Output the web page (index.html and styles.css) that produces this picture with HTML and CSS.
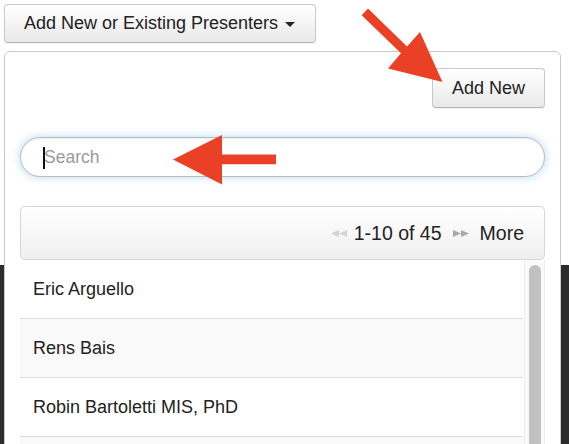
FILE: index.html
```html
<!DOCTYPE html>
<html>
<head>
<meta charset="utf-8">
<link rel="stylesheet" href="styles.css">
</head>
<body>
<div class="page">
  <button class="btn btn-toggle">Add New or Existing Presenters<span class="caret"></span></button>
  <div class="panel">
    <div class="panel-head">
      <button class="btn btn-add">Add New</button>
    </div>
    <div class="search-wrap">
      <input class="search" type="text" placeholder="Search">
      <span class="cursor"></span>
    </div>
    <div class="pager">
      <svg class="pg-arrow prev" width="16" height="7" viewBox="0 0 16 7"><polygon points="0,3.5 8,0 8,7"/><polygon points="8,3.5 16,0 16,7"/></svg>
      <span class="pg-count">1-10 of 45</span>
      <svg class="pg-arrow next" width="16" height="7" viewBox="0 0 16 7"><polygon points="0,0 8,3.5 0,7"/><polygon points="8,0 16,3.5 8,7"/></svg>
      <span class="pg-more">More</span>
    </div>
    <div class="list">
      <ul class="rows">
        <li class="row">Eric Arguello</li>
        <li class="row alt">Rens Bais</li>
        <li class="row">Robin Bartoletti MIS, PhD</li>
        <li class="row alt"></li>
      </ul>
      <div class="scroll"><div class="thumb"></div></div>
    </div>
  </div>
  <svg class="annot" width="569" height="444" viewBox="0 0 569 444">
    <polygon points="368,8.5 407,46.5 420,32 442.5,82 388,68.5 401,53.3 361.7,15.2"/>
    <polygon points="173,159.5 222,135 222,154.5 276,154.5 276,164.3 222,164.3 222,184.5"/>
  </svg>
</div>
</body>
</html>
```

FILE: styles.css
```css
html, body {
  margin: 0;
  padding: 0;
  overflow: hidden;
}
body {
  width: 569px;
  height: 444px;
  background: linear-gradient(#ffffff 0, #ffffff 265px, #2c2c2c 265px, #2c2c2c 100%);
  font-family: "Liberation Sans", Arial, Helvetica, sans-serif;
  color: #222;
}
.page {
  position: relative;
  padding: 4px 0 0 4px;
  height: 444px;
  box-sizing: border-box;
  overflow: hidden;
}
.btn {
  display: flex;
  align-items: center;
  box-sizing: border-box;
  font-family: inherit;
  font-size: 18px;
  color: #222;
  background: linear-gradient(#ffffff, #e9e9e9);
  border: 1px solid #c8c8c8;
  border-bottom-color: #b5b5b5;
  border-radius: 4px;
  box-shadow: inset 0 1px 0 rgba(255,255,255,0.6), 0 1px 1px rgba(0,0,0,0.05);
  margin: 0;
}
.btn-toggle {
  height: 39px;
  padding: 0 20px 0 19px;
}
.caret {
  display: inline-block;
  width: 0;
  height: 0;
  margin-left: 7px;
  margin-top: 2px;
  border-top: 5px solid #222;
  border-left: 5px solid transparent;
  border-right: 5px solid transparent;
}
.panel {
  margin-top: 8px;
  width: 557px;
  height: 440px;
  box-sizing: border-box;
  border: 1px solid #c9c9c9;
  border-radius: 6px;
  background: #fff;
  padding: 16px 15px 0 15px;
  overflow: hidden;
}
.panel-head {
  display: flex;
  justify-content: flex-end;
}
.btn-add {
  height: 40px;
  padding: 0 19px;
}
.search-wrap {
  position: relative;
  margin-top: 29px;
}
.search {
  display: block;
  width: 100%;
  height: 40px;
  box-sizing: border-box;
  border: 1px solid #bdbdbd;
  border-radius: 20px;
  padding: 0 0 0 23px;
  font-family: inherit;
  font-size: 17.5px;
  color: #222;
  outline: none;
  box-shadow: 0 0 8px rgba(82, 168, 236, 0.45), inset 0 1px 2px rgba(0,0,0,0.08);
}
.search::placeholder {
  color: #9a9a9a;
}
.cursor {
  position: absolute;
  left: 23px;
  top: 10px;
  width: 1.5px;
  height: 22px;
  background: #111;
}
.pager {
  margin-top: 29px;
  height: 54px;
  box-sizing: border-box;
  display: flex;
  justify-content: flex-end;
  align-items: center;
  padding-right: 20px;
  border: 1px solid #d6d6d6;
  border-radius: 5px;
  background: linear-gradient(#ffffff, #efefef);
  font-size: 19.5px;
  color: #222;
}
.pg-arrow.prev {
  fill: #d4d4d4;
  margin-right: 7px;
}
.pg-arrow.next {
  fill: #a9a9a9;
  margin-left: 11px;
  margin-right: 11px;
}
.list {
  display: flex;
}
.rows {
  list-style: none;
  margin: 0;
  padding: 0;
  flex: 1;
}
.row {
  height: 58px;
  border-bottom: 1px solid #dcdcdc;
  display: flex;
  align-items: center;
  padding-left: 13px;
  font-size: 18px;
  color: #222;
  background: #fff;
}
.row.alt {
  background: #f9f9f9;
}
.scroll {
  width: 19px;
  margin-left: 1px;
  border-left: 1px solid #ececec;
  border-right: 1px solid #ececec;
  background: #fafafa;
  padding-top: 5px;
  display: flex;
  justify-content: center;
}
.thumb {
  width: 12px;
  height: 300px;
  border-radius: 6px;
  background: #c1c1c1;
}
.annot {
  position: absolute;
  left: 0;
  top: 0;
  fill: #ea4126;
  pointer-events: none;
}
```
